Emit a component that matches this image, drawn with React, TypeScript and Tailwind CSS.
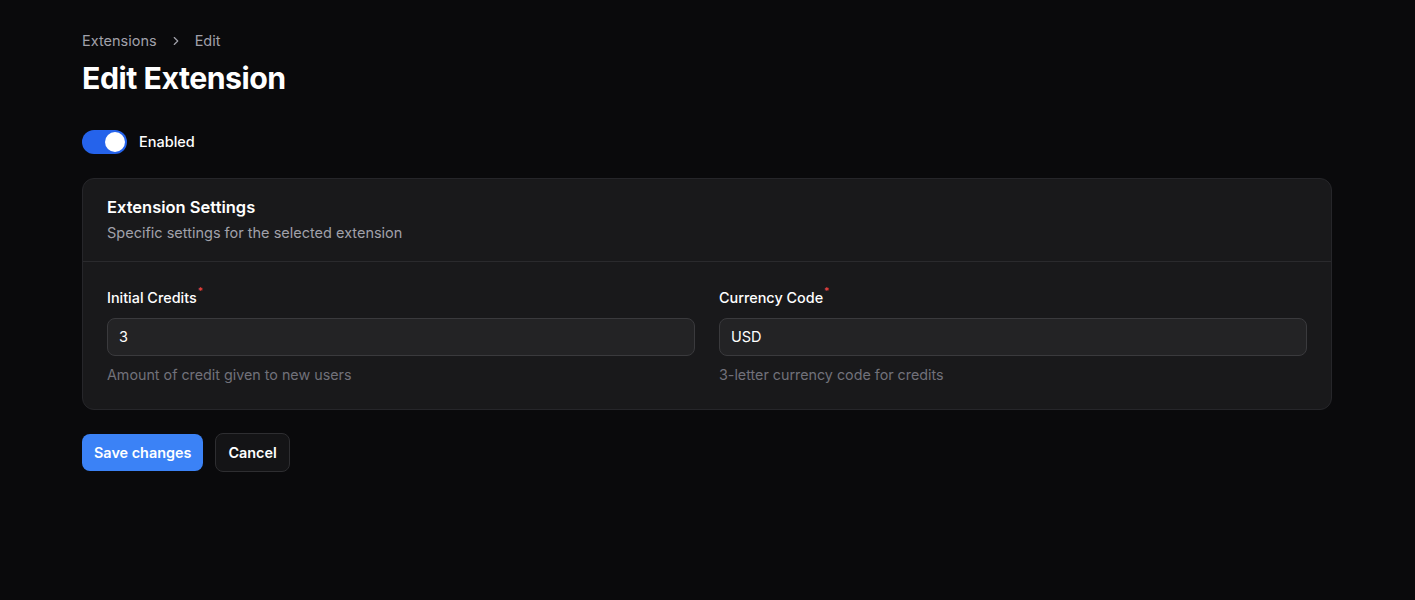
import React from "react";

export default function App() {
  return (
    <div className="min-h-[600px] w-full bg-[#0a0a0c] text-white" style={{ fontFamily: "Inter, 'Noto Sans', sans-serif" }}>
      <div className="pl-[82px] pr-[83px] pt-[31px]">
        <nav className="flex items-center gap-[10px] text-[14.5px] leading-[20px] text-[#a1a1aa]">
          <span>Extensions</span>
          <svg width="14" height="14" viewBox="0 0 24 24" fill="none" stroke="currentColor" strokeWidth="2" strokeLinecap="round" strokeLinejoin="round" className="mx-[2px]">
            <path d="m9 18 6-6-6-6" />
          </svg>
          <span>Edit</span>
        </nav>
        <h1 className="mt-[9px] text-[30.3px] font-bold leading-[36px] tracking-[-0.5px]">Edit Extension</h1>
        <div className="mt-[34px] flex items-center gap-3">
          <div className="flex h-[24px] w-[45px] items-center rounded-full bg-[#2563eb] p-[2px] justify-end">
            <div className="h-[20px] w-[20px] rounded-full bg-white" />
          </div>
          <span className="text-[14.5px] font-medium">Enabled</span>
        </div>
        <div className="mt-[24px] rounded-[12px] border border-[#26262a] bg-[#19191b]">
          <div className="border-b border-[#2a2a2d] px-[24px] pt-[16px] pb-[18px]">
            <h2 className="text-[16.5px] font-semibold leading-[24px]">Extension Settings</h2>
            <p className="mt-[4px] text-[14.5px] leading-[20px] text-[#a1a1aa]">Specific settings for the selected extension</p>
          </div>
          <div className="grid grid-cols-2 gap-[24px] px-[24px] pt-[26px] pb-[24px]">
            <Field label="Initial Credits" value="3" help="Amount of credit given to new users" />
            <Field label="Currency Code" value="USD" help="3-letter currency code for credits" />
          </div>
        </div>
        <div className="mt-[24px] flex gap-3">
          <button className="h-[37px] rounded-[8px] bg-[#3b82f6] px-[12px] text-[14.4px] font-semibold text-white">Save changes</button>
          <button className="h-[39px] -mt-[1px] rounded-[8px] border border-[#2e2e31] bg-[#141416] px-[12px] text-[14.4px] font-semibold text-white">Cancel</button>
        </div>
      </div>
    </div>
  );
}

function Field({ label, value, help }: { label: string; value: string; help: string }) {
  return (
    <div className="flex flex-col">
      <label className="flex text-[14.4px] font-medium leading-[20px]">
        {label}
        <span className="-mt-[3px] ml-[1px] text-[10px] leading-[12px] text-[#ef4444]">*</span>
      </label>
      <div className="mt-[10px] flex h-[38px] items-center rounded-[8px] border border-[#3a3a3d] bg-[#232325] px-[11px] text-[14.5px] text-white">
        {value}
      </div>
      <p className="mt-[9px] text-[14.3px] leading-[20px] text-[#71717a]">{help}</p>
    </div>
  );
}
